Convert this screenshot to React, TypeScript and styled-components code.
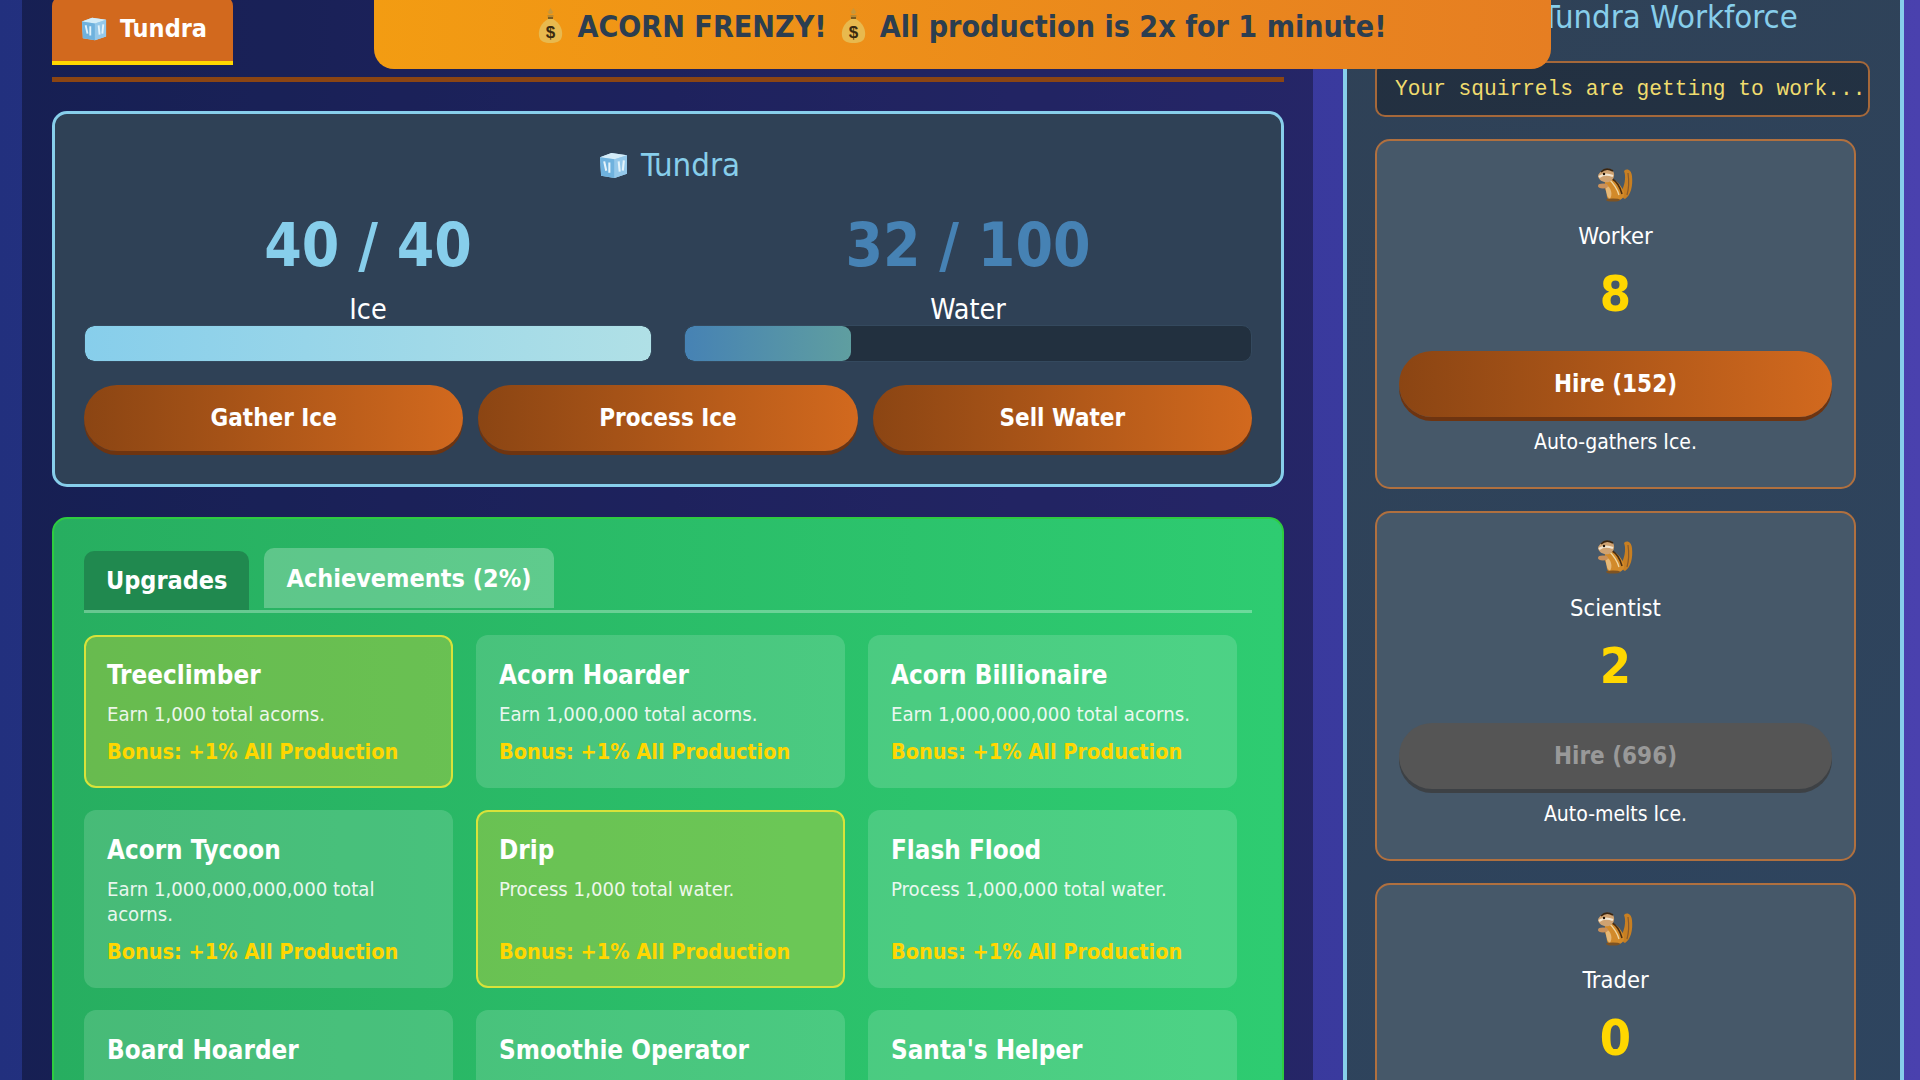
import React from 'react';
import styled, { createGlobalStyle } from 'styled-components';

const GlobalStyle = createGlobalStyle`
  html, body {
    margin: 0;
    padding: 0;
    height: 100%;
    overflow: hidden;
  }
  body {
    background: linear-gradient(90deg, #22307e 0%, #3a3a9e 70%, #4a41ae 100%);
    font-family: "DejaVu Sans Condensed", "DejaVu Sans", sans-serif;
    font-stretch: condensed;
    color: #fff;
  }
  * { box-sizing: border-box; }
`;

const Viewport = styled.div`
  position: relative;
  height: 1080px;
  overflow: hidden;
`;

const Layout = styled.div`
  display: grid;
  grid-template-columns: 1291px 561px;
  column-gap: 30px;
  padding-left: 22px;
  margin-top: -30px;
`;

const MainColumn = styled.main`
  background: rgba(0, 0, 0, 0.34);
  padding: 26px 29px 30px 30px;
`;

const ZoneTabs = styled.div`
  display: flex;
  border-bottom: 5px solid #8b4513;
  padding-bottom: 12px;
  margin-bottom: 29px;
`;

const ZoneTab = styled.div`
  display: flex;
  align-items: center;
  justify-content: center;
  gap: 13px;
  width: 181px;
  height: 69px;
  padding-left: 3px;
  background: #d2691e;
  border-bottom: 4px solid #ffd700;
  border-radius: 10px 10px 0 0;
  font-size: 25px;
  font-weight: 700;
`;

const ZonePanel = styled.section`
  background: #2f4156;
  border: 3px solid #87ceeb;
  border-radius: 15px;
  padding: 28px 29px 25px;
  height: 376px;
`;

const ZoneTitle = styled.h2`
  display: flex;
  align-items: center;
  justify-content: center;
  gap: 13px;
  margin: 0;
  height: 46px;
  padding-left: 3px;
  color: #87ceeb;
  font-size: 32.7px;
  font-weight: 400;
`;

const ResourceRow = styled.div`
  display: grid;
  grid-template-columns: 1fr 1fr;
  column-gap: 32px;
  margin-top: 18px;
`;

const Resource = styled.div`
  display: flex;
  flex-direction: column;
  align-items: center;
`;

const ResourceValue = styled.div<{ $color: string }>`
  color: ${(p) => p.$color};
  font-size: 60px;
  font-weight: 700;
  line-height: 78px;
`;

const ResourceLabel = styled.div`
  font-size: 28.5px;
  line-height: 28px;
  margin-top: 12px;
`;

const Bar = styled.div`
  width: 100%;
  height: 37px;
  margin-top: 1px;
  background: #22303f;
  border: 1px solid #34495e;
  border-radius: 10px;
  overflow: hidden;
`;

const BarFill = styled.div<{ $from: string; $to: string }>`
  height: 100%;
  background: linear-gradient(90deg, ${(p) => p.$from}, ${(p) => p.$to});
  border-radius: 9px;
`;

const ActionRow = styled.div`
  display: grid;
  grid-template-columns: repeat(3, 1fr);
  column-gap: 15px;
  margin-top: 23px;
`;

const Button = styled.button<{ $disabled?: boolean }>`
  height: 66px;
  border: none;
  border-radius: 33px;
  font-family: inherit;
  font-stretch: condensed;
  font-size: 24px;
  font-weight: 700;
  color: ${(p) => (p.$disabled ? '#999' : '#fff')};
  background: ${(p) => (p.$disabled ? '#555' : 'linear-gradient(90deg, #8b4513, #d2691e)')};
  box-shadow: 0 4px 0 ${(p) => (p.$disabled ? '#3d4145' : '#6e3410')};
`;

const UpgradesPanel = styled.section`
  background: linear-gradient(90deg, #27ae60, #2ecc71);
  border: 2px solid #2ecc40;
  border-radius: 15px;
  padding: 29px 30px;
  margin-top: 30px;
  height: 700px;
`;

const TabRow = styled.div`
  display: flex;
  gap: 15px;
  height: 65px;
  border-bottom: 3px solid rgba(255, 255, 255, 0.3);
`;

const PanelTab = styled.div<{ $active?: boolean }>`
  display: flex;
  align-items: center;
  padding: 0 22px;
  height: ${(p) => (p.$active ? '59px' : '60px')};
  margin-top: ${(p) => (p.$active ? '3px' : '0')};
  background: ${(p) => (p.$active ? '#20894f' : 'rgba(255, 255, 255, 0.25)')};
  border-radius: 10px 10px 0 0;
  font-size: 25px;
  font-weight: 700;
`;

const AchievementGrid = styled.div`
  display: grid;
  grid-template-columns: repeat(3, 369px);
  gap: 22px 23px;
  margin-top: 22px;
`;

const AchievementCard = styled.div<{ $done?: boolean }>`
  display: flex;
  flex-direction: column;
  min-height: 153px;
  padding: 22px 21px 21px;
  border: 2px solid ${(p) => (p.$done ? '#d8e33a' : 'transparent')};
  border-radius: 12px;
  background: ${(p) => (p.$done ? 'rgba(255, 215, 40, 0.3)' : 'rgba(255, 255, 255, 0.15)')};
`;

const AchievementName = styled.div`
  font-size: 25.8px;
  font-weight: 700;
  line-height: 32px;
`;

const AchievementDesc = styled.div`
  flex: 1;
  margin-top: 11px;
  font-size: 20.2px;
  line-height: 25px;
  opacity: 0.88;
`;

const AchievementBonus = styled.div`
  margin-top: 12px;
  color: #ffd700;
  font-size: 21.5px;
  font-weight: 700;
  line-height: 26px;
`;

const SidePanel = styled.aside`
  background: linear-gradient(135deg, #2f4156, #2e4560);
  border-left: 4px solid #87ceeb;
  border-right: 4px solid #87ceeb;
  padding: 26px 28px 30px;
`;

const SideTitle = styled.h2`
  margin: 0;
  padding-left: 167px;
  color: #87ceeb;
  font-size: 32.6px;
  font-weight: 400;
  line-height: 42px;
`;

const LogBox = styled.div`
  margin-top: 23px;
  height: 56px;
  width: 495px;
  padding: 0 18px;
  display: flex;
  align-items: center;
  background: rgba(0, 0, 0, 0.25);
  border: 2px solid #a5683a;
  border-radius: 10px;
  color: #f0dc6e;
  font-family: "Liberation Mono", monospace;
  font-stretch: normal;
  font-size: 21.2px;
  white-space: nowrap;
`;

const WorkerList = styled.div`
  display: flex;
  flex-direction: column;
  gap: 22px;
  width: 481px;
  margin-top: 22px;
`;

const WorkerCard = styled.div`
  display: flex;
  flex-direction: column;
  align-items: center;
  height: 350px;
  padding: 27px 22px 24px;
  background: #465869;
  border: 2px solid #b0703f;
  border-radius: 15px;
`;

const WorkerName = styled.div`
  margin-top: 19px;
  font-size: 23.5px;
  line-height: 30px;
`;

const WorkerCount = styled.div`
  margin-top: 15px;
  color: #ffd700;
  font-size: 50px;
  font-weight: 700;
  line-height: 56px;
`;

const HireButton = styled(Button)`
  width: 100%;
  margin-top: 29px;
`;

const WorkerDesc = styled.div`
  margin-top: 12px;
  font-size: 21px;
  line-height: 26px;
`;

const FrenzyBanner = styled.div`
  position: absolute;
  top: 0;
  left: 374px;
  width: 1177px;
  height: 69px;
  display: flex;
  align-items: center;
  justify-content: center;
  gap: 14px;
  padding-bottom: 17px;
  background: linear-gradient(90deg, #f39c12, #e67e22);
  border-radius: 0 0 20px 20px;
  color: #2c3e50;
  font-size: 30.15px;
  font-weight: 700;
`;

const IceCube: React.FC<{ size: number }> = ({ size }) => (
  <svg width={size} height={size} viewBox="2 4 28 26">
    <path d="M3 9 L14 5 L29 7 L29 25 L17 29 L4 27 Z" fill="#a9d4ee" />
    <path d="M3 9 L17 11 L29 7 L14 5 Z" fill="#d4ecf8" />
    <path d="M3 9 L17 11 L17 29 L4 27 Z" fill="#6fb2de" />
    <path d="M17 11 L29 7 L29 25 L17 29 Z" fill="#94c8ea" />
    <path d="M7 13 L9 22 M12 14 L12 24 M21 13 L22 23 M26 12 L25 22" stroke="#e3f3fb" strokeWidth="2" fill="none" />
  </svg>
);

const MoneyBag: React.FC = () => (
  <svg width="25" height="36" viewBox="0 0 25 36">
    <path d="M8 1 L11 6 L14 6 L17 1 L15 4 L12.5 0 L10 4 Z" fill="#c9973a" />
    <path d="M9.5 7 L15.5 7 L15 11 L10 11 Z" fill="#b98a33" />
    <path d="M10 11 C3 15 0 22 1 28 C2 34 7 35 12.5 35 C18 35 23 34 24 28 C25 22 22 15 15 11 Z" fill="#e8b94e" />
    <path d="M10 10 L15 10" stroke="#7a5a1f" strokeWidth="2" />
    <text x="12.5" y="30" textAnchor="middle" fontSize="17" fill="#3a2a10" fontFamily="Liberation Sans">$</text>
  </svg>
);

const Chipmunk: React.FC = () => (
  <svg width="35" height="34" viewBox="0 0 35 34" style={{ flexShrink: 0 }}>
    <path d="M27 31 C33 27 35 18 34 8 C33.5 2 29 0 26 3 C28 8 27 15 25 20 C23 25 23 29 27 31 Z" fill="#c87f22" />
    <path d="M29 27 C31 20 31 12 30 5" stroke="#8a5a2a" strokeWidth="1.2" fill="none" />
    <path d="M7 14 C13 8 22 14 26 24 C27 30 23 33 15 33 C10 33 8 29 9 25 C7 22 6 18 7 14 Z" fill="#d28a2a" />
    <path d="M13 10 C18 13 22 18 24 26" stroke="#4a2c10" strokeWidth="1.5" fill="none" />
    <path d="M11 11 C15 15 19 20 21 27" stroke="#f0d6a0" strokeWidth="1.3" fill="none" />
    <path d="M8 17 C13 19 15 26 12 31 C9 30 7 22 8 17 Z" fill="#e6b877" />
    <path d="M0 8 C2 2 9 -1 14 2 C18 6 16 12 11 14 C6 15 1 13 0 8 Z" fill="#cfa271" />
    <path d="M3 4 C6 1 10 0 15 3" stroke="#3a2510" strokeWidth="1.6" fill="none" />
    <path d="M1 9 C5 6 10 6 15 8" stroke="#f4e6d0" strokeWidth="2.2" fill="none" />
    <circle cx="6" cy="6" r="1.2" fill="#1d1208" />
    <ellipse cx="5" cy="18" rx="5" ry="2.4" fill="#c9905a" />
    <ellipse cx="15" cy="32" rx="7" ry="1.6" fill="#7e5322" />
  </svg>
);

// the last row runs off the bottom of the window, only the names show
const achievements: { name: string; desc?: string; done?: boolean }[] = [
  { name: 'Treeclimber', desc: 'Earn 1,000 total acorns.', done: true },
  { name: 'Acorn Hoarder', desc: 'Earn 1,000,000 total acorns.' },
  { name: 'Acorn Billionaire', desc: 'Earn 1,000,000,000 total acorns.' },
  { name: 'Acorn Tycoon', desc: 'Earn 1,000,000,000,000 total acorns.' },
  { name: 'Drip', desc: 'Process 1,000 total water.', done: true },
  { name: 'Flash Flood', desc: 'Process 1,000,000 total water.' },
  { name: 'Board Hoarder' },
  { name: 'Smoothie Operator' },
  { name: "Santa's Helper" },
];

const workers: { name: string; count: number; cost?: number; desc?: string; disabled?: boolean }[] = [
  { name: 'Worker', count: 8, cost: 152, desc: 'Auto-gathers Ice.' },
  { name: 'Scientist', count: 2, cost: 696, desc: 'Auto-melts Ice.', disabled: true },
  { name: 'Trader', count: 0 },
];

const App: React.FC = () => {
  return (
    <Viewport>
      <GlobalStyle />
      <Layout>
        <MainColumn>
          <ZoneTabs>
            <ZoneTab>
              <IceCube size={26} />
              Tundra
            </ZoneTab>
          </ZoneTabs>

          <ZonePanel>
            <ZoneTitle>
              <IceCube size={29} />
              Tundra
            </ZoneTitle>
            <ResourceRow>
              <Resource>
                <ResourceValue $color="#87ceeb">40 / 40</ResourceValue>
                <ResourceLabel>Ice</ResourceLabel>
                <Bar>
                  <BarFill $from="#87ceeb" $to="#b0e0e6" style={{ width: '100%' }} />
                </Bar>
              </Resource>
              <Resource>
                <ResourceValue $color="#4682b4">32 / 100</ResourceValue>
                <ResourceLabel>Water</ResourceLabel>
                <Bar>
                  <BarFill $from="#4682b4" $to="#5f9ea0" style={{ width: '29.3%' }} />
                </Bar>
              </Resource>
            </ResourceRow>
            <ActionRow>
              <Button>Gather Ice</Button>
              <Button>Process Ice</Button>
              <Button>Sell Water</Button>
            </ActionRow>
          </ZonePanel>

          <UpgradesPanel>
            <TabRow>
              <PanelTab $active>Upgrades</PanelTab>
              <PanelTab>Achievements (2%)</PanelTab>
            </TabRow>
            <AchievementGrid>
              {achievements.map((a) => (
                <AchievementCard key={a.name} $done={a.done}>
                  <AchievementName>{a.name}</AchievementName>
                  {a.desc && (
                    <>
                      <AchievementDesc>{a.desc}</AchievementDesc>
                      <AchievementBonus>Bonus: +1% All Production</AchievementBonus>
                    </>
                  )}
                </AchievementCard>
              ))}
            </AchievementGrid>
          </UpgradesPanel>
        </MainColumn>

        <SidePanel>
          <SideTitle>Tundra Workforce</SideTitle>
          <LogBox>Your squirrels are getting to work...</LogBox>
          <WorkerList>
            {workers.map((w) => (
              <WorkerCard key={w.name}>
                <Chipmunk />
                <WorkerName>{w.name}</WorkerName>
                <WorkerCount>{w.count}</WorkerCount>
                {w.cost && <HireButton $disabled={w.disabled}>Hire ({w.cost})</HireButton>}
                {w.desc && <WorkerDesc>{w.desc}</WorkerDesc>}
              </WorkerCard>
            ))}
          </WorkerList>
        </SidePanel>
      </Layout>

      <FrenzyBanner>
        <MoneyBag />
        ACORN FRENZY!
        <MoneyBag />
        All production is 2x for 1 minute!
      </FrenzyBanner>
    </Viewport>
  );
};

export default App;
